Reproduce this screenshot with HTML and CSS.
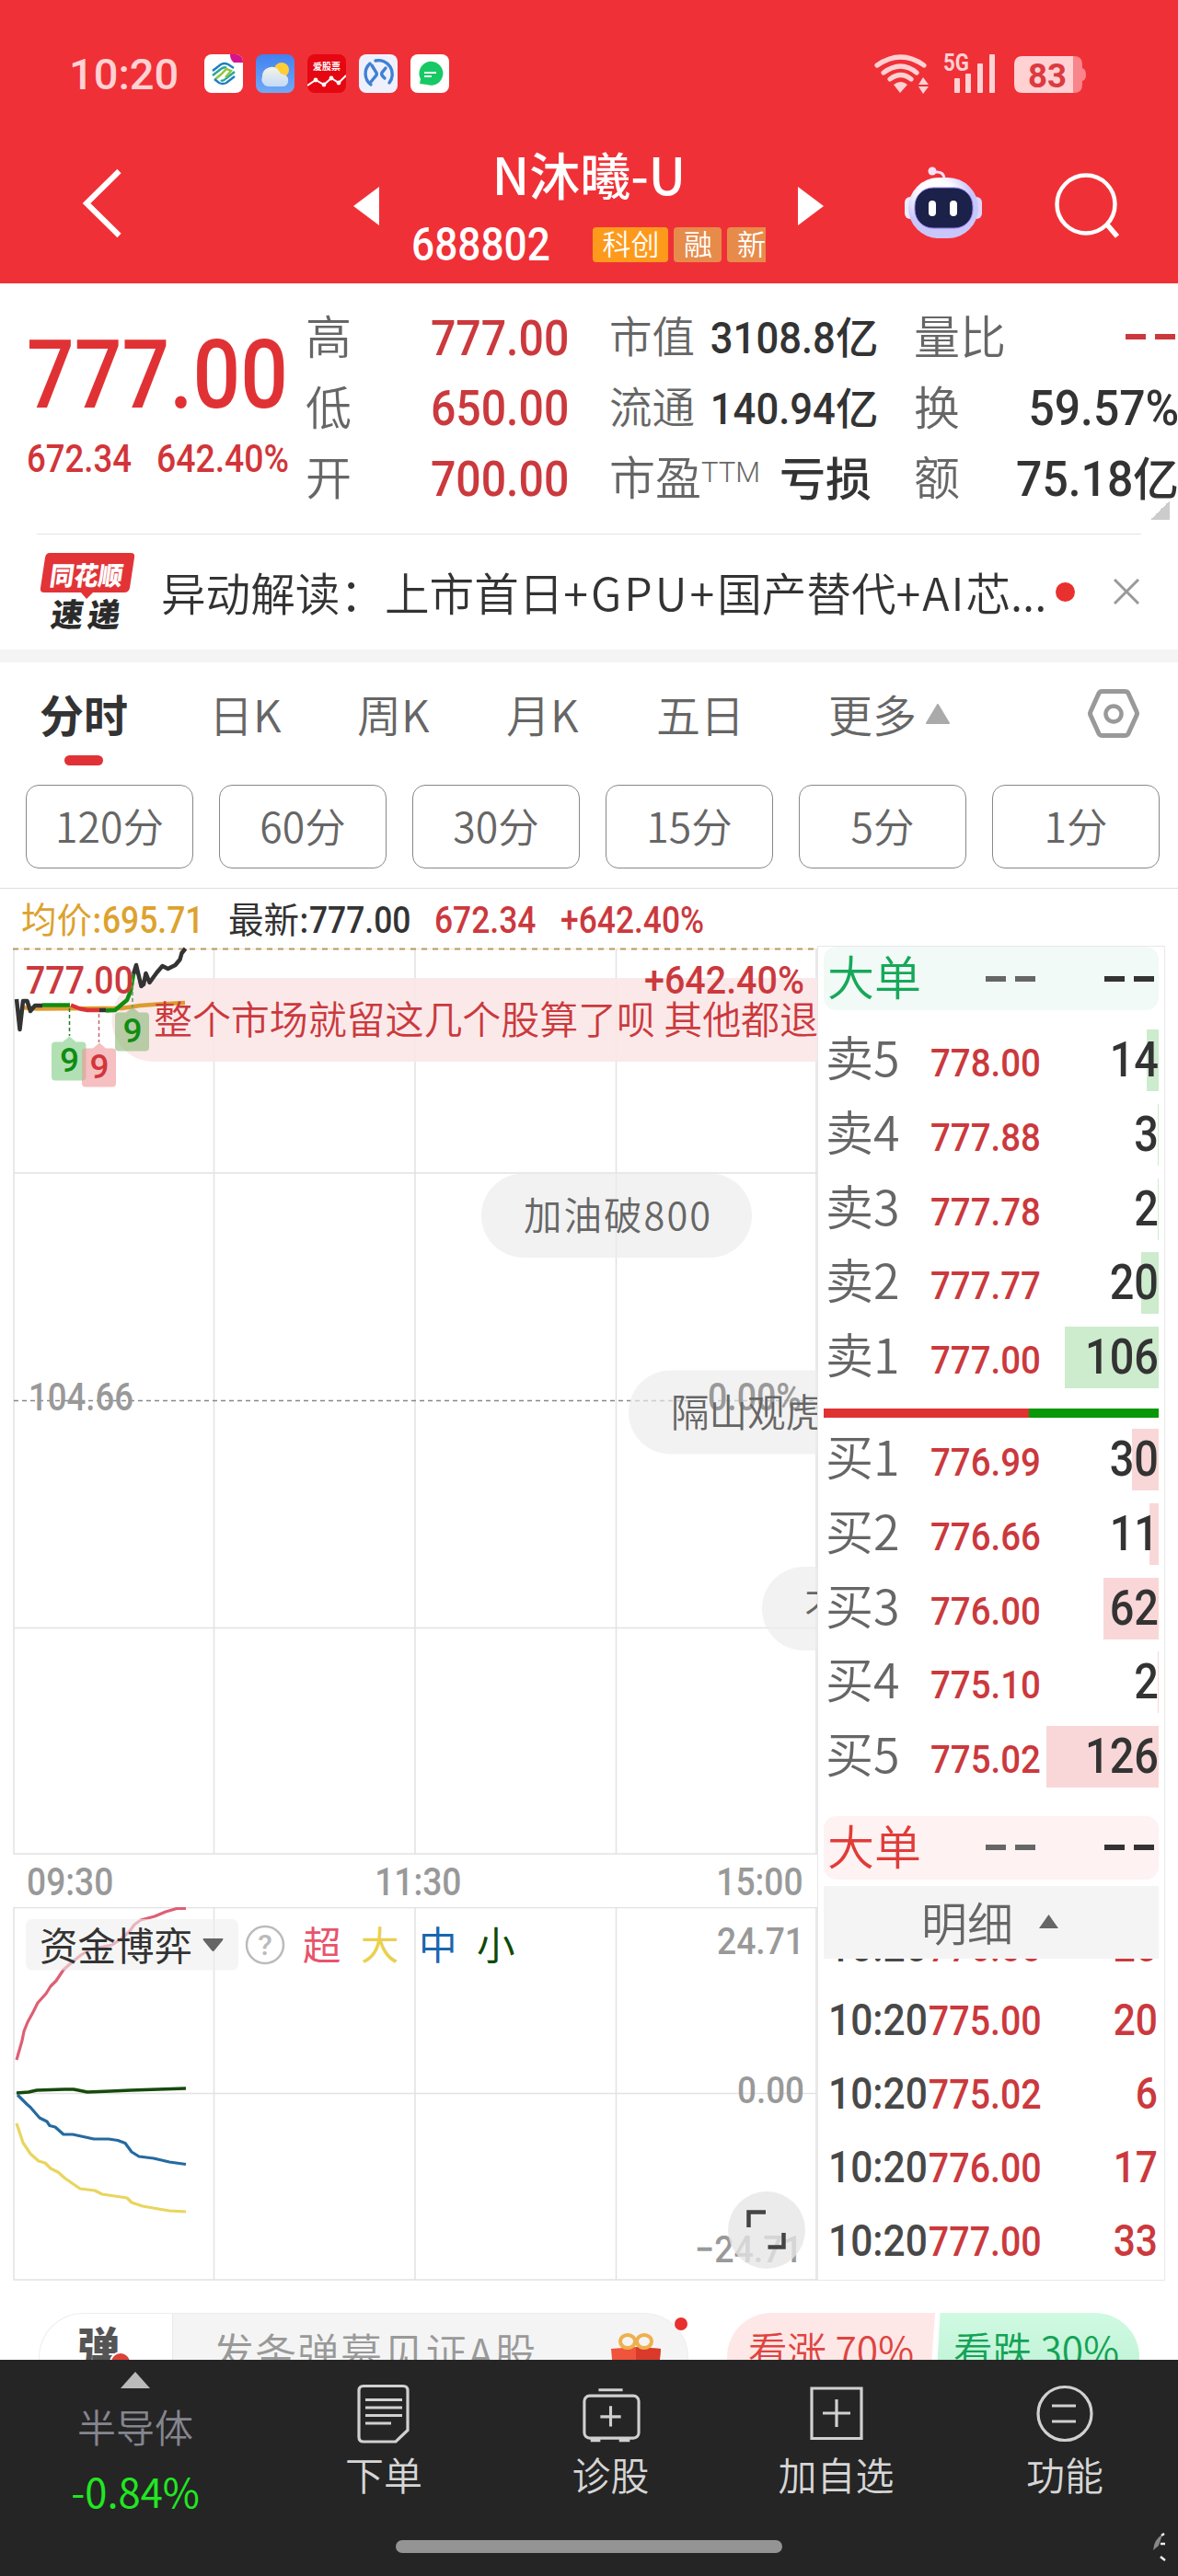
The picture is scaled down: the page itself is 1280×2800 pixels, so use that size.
FILE: index.html
```html
<!DOCTYPE html>
<html lang="zh-CN">
<head>
<meta charset="utf-8">
<title>N沐曦-U 688802</title>
<link rel="stylesheet" href="styles.css">
</head>
<body>
<header class="top">
  <div class="status">
    <span class="clock">10:20</span>
    <div class="apps">
      <svg viewBox="0 0 42 42"><rect width="42" height="42" rx="8" fill="#fff"/><path d="M28 0h6a8 8 0 0 1 8 8v1H32q-4-3-4-9z" fill="#d4148c"/><g fill="none" stroke-width="2.4"><path d="M9 18l9-7q4-2 8 0l6 4" stroke="#1b7fc0"/><path d="M9 23l9-7q4-3 6-1M33 19l-9 7q-4 4-6 2" stroke="#2aa59a"/><path d="M12 27l6-5 6-6 5 2-6 7" stroke="#8dc63f"/><path d="M33 24l-9 7q-4 2-8 0l-5-4" stroke="#1b7fc0"/></g></svg>
      <svg viewBox="0 0 42 42"><defs><linearGradient id="sky" x2="0" y2="1"><stop stop-color="#4381f0"/><stop offset="1" stop-color="#71a9f5"/></linearGradient><linearGradient id="cloud" x2="0" y2="1"><stop stop-color="#f4f3e8"/><stop offset="1" stop-color="#c4daf7"/></linearGradient></defs><rect width="42" height="42" rx="8" fill="url(#sky)"/><circle cx="28" cy="17" r="8" fill="#ffce35"/><path d="M13 35a8 8 0 0 1-6-11 10 10 0 0 1 18-6q2 4 5 4 6 1 5 8-1 5-6 5z" fill="url(#cloud)"/></svg>
      <svg viewBox="0 0 42 42"><rect width="42" height="42" rx="8" fill="#e50712"/><text x="21" y="17" class="mini" text-anchor="middle">爱股票</text><path d="M0 34l9-6 9 5 8-7 8 5 8-8" fill="none" stroke="#fff" stroke-width="2"/><g fill="#fff"><circle cx="9" cy="28" r="2.4"/><circle cx="18" cy="33" r="2.4"/><circle cx="26" cy="26" r="2.4"/><circle cx="34" cy="31" r="2.4"/></g></svg>
      <svg viewBox="0 0 42 42"><rect width="42" height="42" rx="8" fill="#eef1fb"/><g fill="none" stroke="#3f7fd6" stroke-width="3.4" stroke-linecap="round"><path d="M13 33A15 15 0 0 1 12 10M18 7a15 15 0 0 1 15 24"/><path d="M14 12l5 8q1 2-1 4l-5 6M29 15l-4 5q-1 2 1 4l2 2"/></g></svg>
      <svg viewBox="0 0 42 42"><rect width="42" height="42" rx="8" fill="#fff"/><path d="M10 32l1-5A13 13 0 1 1 18 33z" fill="#17c964"/><path d="M15 20h13M15 24h8" stroke="#fff" stroke-width="1.8"/></svg>
    </div>
    <svg class="signals" viewBox="950 56 230 48">
      <g fill="none" stroke="#ffd1d3" stroke-width="5.2" stroke-linecap="round"><path d="M953 71q26-18 51 0M960 79q19-14 36 0M967 86q12-9 23 0"/></g>
      <path d="M971 92q8-6 15 0l-8 9zM998 92l5-8 6 8zM998 94h11l-6 8z" fill="#ffd1d3"/>
      <text x="1025" y="77" class="fiveg" textLength="28" lengthAdjust="spacingAndGlyphs">5G</text>
      <g fill="#ffd1d3"><rect x="1037" y="85" width="6" height="16" rx="1"/><rect x="1049" y="80" width="6" height="21" rx="1"/><rect x="1062" y="69" width="6" height="32" rx="1"/><rect x="1075" y="59" width="6" height="42" rx="1"/></g>
      <path d="M1166 61h1q9 0 9 9v4q4 1 4 7t-4 7v4q0 9-9 9h-1z" fill="#f98489"/><path d="M1111 61h55v40h-55q-9 0-9-9V70q0-9 9-9z" fill="#ffd1d3"/>
      <text x="1117" y="95" class="batt" textLength="42" lengthAdjust="spacingAndGlyphs">83</text>
    </svg>
  </div>
  <nav class="titlebar">
    <svg class="back" viewBox="88 180 46 82"><path d="M129.500 186L94 221l35.500 35" fill="none" stroke="#fff" stroke-width="6"/></svg>
    <svg class="tri" viewBox="0 0 28 42"><path d="M28 0v42L0 21z" fill="#fff"/></svg>
    <div class="stock">
      <h1>N沐曦-U</h1>
      <div class="code"><span class="n">688802</span><div class="tags"><i class="hot">科创</i><i>融</i><i class="cut">新</i></div></div>
    </div>
    <svg class="tri right" viewBox="0 0 28 42"><path d="M0 0v42l28-21z" fill="#fff"/></svg>
    <svg class="robot" viewBox="982 180 86 80"><defs><radialGradient id="rob" cx=".4" cy=".3"><stop offset=".5" stop-color="#fff"/><stop offset="1" stop-color="#c9c6fa"/></radialGradient></defs><path d="M1026 195q0-9-10-8" fill="none" stroke="#f3ddf2" stroke-width="3"/><circle cx="1013" cy="186" r="4.500" fill="#f5e3f6"/><rect x="983" y="214" width="12" height="24" rx="6" fill="#efeaff"/><rect x="1055" y="214" width="12" height="24" rx="6" fill="#dcd5fc"/><rect x="987" y="193" width="76" height="66" rx="33" fill="url(#rob)"/><rect x="994" y="204" width="63" height="44" rx="20" fill="#1b2148" stroke="#8d7cf5"/><rect x="1009" y="218" width="8" height="17" rx="4" fill="#fff"/><rect x="1032" y="218" width="8" height="17" rx="4" fill="#fff"/></svg>
    <svg class="search" viewBox="1144 186 74 74"><circle cx="1180" cy="222" r="31.500" fill="none" stroke="#fff" stroke-width="4.500"/><path d="M1202 243l12 14" stroke="#fff" stroke-width="5.500"/></svg>
  </nav>
</header>

<section class="quote">
  <div class="last">
    <div class="price"><span class="n">777.00</span></div>
    <div class="chg"><span class="n">672.34</span><span class="n">642.40%</span></div>
  </div>
  <dl class="col a">
    <div><dt>高</dt><dd class="up"><span class="n r">777.00</span></dd></div>
    <div><dt>低</dt><dd class="up"><span class="n r">650.00</span></dd></div>
    <div><dt>开</dt><dd class="up"><span class="n r">700.00</span></dd></div>
  </dl>
  <dl class="col b">
    <div class="s"><dt>市值</dt><dd><span class="n r">3108.8</span>亿</dd></div>
    <div class="s"><dt>流通</dt><dd><span class="n r">140.94</span>亿</dd></div>
    <div><dt>市盈<sup>TTM</sup></dt><dd>亏损</dd></div>
  </dl>
  <dl class="col c">
    <div><dt>量比</dt><dd class="up"><span class="dash"></span></dd></div>
    <div><dt>换</dt><dd><span class="n r">59.57%</span></dd></div>
    <div><dt>额</dt><dd><span class="n r">75.18</span>亿</dd></div>
  </dl>
  <i class="corner"></i>
</section>

<section class="news">
  <svg class="logo" viewBox="42 600 106 86"><path d="M54 601h88q5 0 4 5l-5 33q-1 5-6 5h-34l-7 7-6-7H48q-5 0-4-5l5-33q1-5 5-5z" fill="#e23437"/><g class="logotext"><text transform="translate(53 636) skewX(-8)" fill="#fff" font-size="28" textLength="79" lengthAdjust="spacingAndGlyphs">同花顺</text><text transform="translate(54 681) skewX(-8)" fill="#2b2b2b" font-size="35" textLength="75" lengthAdjust="spacing">速递</text></g></svg>
  <p>异动解读：上市首日<span>+GPU+</span>国产替代<span>+AI</span>芯...</p>
  <i class="dot"></i>
  <svg class="close" viewBox="0 0 28 28"><path d="M1 1l26 26M27 1L1 27" stroke="#999" stroke-width="3"/></svg>
</section>

<nav class="tabs">
  <span class="on">分时</span><span>日K</span><span>周K</span><span>月K</span><span>五日</span><span>更多<svg viewBox="0 0 26 22"><path d="M13 1l12 20H1z" fill="#aaa" stroke="#aaa" stroke-linejoin="round" stroke-width="2"/></svg></span>
  <svg class="gear" viewBox="1180 746 60 60"><path d="M1198 751.500h24q3 0 4 2l9 20q1 2 0 4l-9 20q-1 2-4 2h-24q-3 0-4-2l-9-20q-1-2 0-4l9-20q1-2 4-2z" fill="none" stroke="#999" stroke-width="5"/><circle cx="1210" cy="776" r="8.500" fill="none" stroke="#999" stroke-width="4.500"/></svg>
</nav>
<div class="periods"><span>120分</span><span>60分</span><span>30分</span><span>15分</span><span>5分</span><span>1分</span></div>

<div class="legend">
  <span class="avg">均价:<b class="n">695.71</b></span><span>最新:<b class="n">777.00</b></span><span class="up"><b class="n">672.34</b></span><span class="up"><b class="n">+642.40%</b></span>
</div>

<main class="board">
  <div class="charts">
    <svg class="chart" viewBox="0 1028 888 988">
      <g stroke="#e2e2e2" stroke-width="1.500" fill="none"><path d="M15 1031V2015H888M232.500 1031V2015M451 1031V2015M669.500 1031V2015M887 1031V2015M15 1275H888M15 1769.500H888"/></g>
      <path d="M14 1031.500H888" stroke="#f2e6cf"/><path d="M14 1031.500H888" stroke="#b39a62" stroke-width="2" stroke-dasharray="6 6"/>
      <path d="M15 1522.500H888" stroke="#888" stroke-width="1.500" stroke-dasharray="5 4"/>
      <path d="M888 1063H167a45.500 45.500 0 0 0 0 91H888z" fill="#fbe6e7" fill-opacity=".88"/>
      <g fill="#ececec" fill-opacity=".68"><rect x="523" y="1275.500" width="294" height="91.500" rx="45.700"/><rect x="683" y="1489.500" width="294" height="91" rx="45.500"/><rect x="828" y="1703" width="200" height="91" rx="45.500"/></g>
      <g fill="none" stroke-linejoin="round" stroke-width="4.500">
        <path d="M22 1095l18 1.500 70-.5 22 0 20-3 20-1.500 29-1.500" stroke="#dd9c2f"/>
        <path d="M18 1086l3.500 33 3.500-31 4.500 0 3.500 11 5-6h8" stroke="#333"/>
        <path d="M46 1092.500h30" stroke="#0f8d12"/><path d="M77 1092.500l10 4 8 1.500h13" stroke="#db3237"/><path d="M108 1098h7" stroke="#333"/>
        <path d="M115 1098.500l10-.5 7-6 6-5 4-10 3-18" stroke="#0f8d12"/>
        <path d="M145 1059l3-10 5.500 23 2.500-2 2.500-12 4 10 8-11 6-7 6 3 8-4 5-6 2-7 4-5" stroke="#333"/>
      </g>
      <g stroke-width="1.500" stroke-dasharray="4 3"><path d="M75.500 1096v30" stroke="#267a26"/><path d="M107.500 1102v31" stroke="#c66"/><path d="M144 1064v31" stroke="#5b9a5b"/></g>
      <path d="M75.500 1126.500l7 6h7q4 0 4 4v34q0 4-4 4H60q-4 0-4-4v-34q0-4 4-4h8z" fill="#83cd87" fill-opacity=".62"/>
      <path d="M108 1133.500l7 6h7q4 0 4 4v34q0 4-4 4H93q-4 0-4-4v-34q0-4 4-4h8z" fill="#f09498" fill-opacity=".6"/>
      <path d="M144 1094.500l7 6h7q4 0 4 4v34q0 4-4 4h-29q-4 0-4-4v-34q0-4 4-4h8z" fill="#8ab877" fill-opacity=".6"/>
      <g class="nine"><text x="75.500" y="1165" fill="#0f8d12">9</text><text x="108" y="1172" fill="#d3363a">9</text><text x="144" y="1133" fill="#0f8d12">9</text></g>
      <g class="num" font-size="42"><text x="28" y="1079.500" fill="#cb393d" textLength="117" lengthAdjust="spacingAndGlyphs">777.00</text><text x="700" y="1079.500" fill="#cb393d" textLength="174" lengthAdjust="spacingAndGlyphs">+642.40%</text><text x="31" y="1533" fill="#999" textLength="114" lengthAdjust="spacingAndGlyphs">104.66</text><text x="769" y="1533" fill="#999" textLength="102" lengthAdjust="spacingAndGlyphs">0.00%</text></g>
      <g class="cjk" font-size="42"><text x="167" y="1124" fill="#cb393d" textLength="722">整个市场就留这几个股算了呗 其他都退</text><g fill="#666" font-size="41.500"><text x="569" y="1337" textLength="203">加油破800</text><text x="729" y="1551">隔山观虎</text><text x="874" y="1763">不</text></g></g>
    </svg>
    <div class="times"><span class="n">09:30</span><span class="n m">11:30</span><span class="n r">15:00</span></div>
    <svg class="chart" viewBox="0 2073 888 406">
      <g stroke="#e2e2e2" stroke-width="1.500" fill="none"><path d="M888 2073.500H15V2478H888M232.500 2073V2478M451 2073V2478M669.500 2073V2478M887 2073V2478M15 2275.500H888"/></g>
      <g fill="none" stroke-linejoin="round" stroke-width="3.200">
        <path d="M18 2239L24 2218 26 2208 30 2198 36 2187 41 2177 50 2167 55 2159 61 2153 69 2141 78 2133 88 2125 98 2119 122 2114 131 2108 141 2099 146 2092 153 2087 168 2083 180 2078 192 2074.500 202 2074.500" stroke="#de5f74"/>
        <path d="M18 2275l13-1 9-2 30-1 10 0 15 3 25-1 22-1 60-2" stroke="#164a0b" stroke-width="3.500"/>
        <path d="M19 2277L29 2287 33 2290.500 43 2302 51 2306 54 2310.500 60 2312 69 2320 79 2320 102 2325 118 2325 128 2326.500 136 2329.500 143 2339 151 2344 167 2346 184 2350 202 2352.500" stroke="#256a9e"/>
        <path d="M18 2308l7 21 8 12 9 8 7 2 6 6 8 4 8 7 16 11 16 2 8 4 27 4 5 5 12 4 17 3 12 2 18 1" stroke="#e9d55e"/>
      </g>
      <rect x="28" y="2086" width="231" height="55.500" rx="7" fill="#eee" fill-opacity=".6"/>
      <path d="M221 2107h21q1 0 0 2l-9 11q-1 2-3 0l-9-11q-1-2 0-2z" fill="#666"/>
      <circle cx="288" cy="2114" r="20" fill="none" stroke="#bbb" stroke-width="2.500"/>
      <text class="num" x="288" y="2125" font-size="32" fill="#bbb" text-anchor="middle">?</text>
      <g class="cjk legend2" font-size="41.500"><text x="43" y="2131" fill="#333">资金博弈</text><text x="329" y="2130" fill="#e8536c">超</text><text x="392" y="2130" fill="#ead04c">大</text><text x="455" y="2130" fill="#1a66ae">中</text><text x="518" y="2130" fill="#0e4a06">小</text></g>
      <g class="num" font-size="41" fill="#999"><text x="779" y="2124" textLength="95" lengthAdjust="spacingAndGlyphs">24.71</text><text x="801" y="2286" textLength="73" lengthAdjust="spacingAndGlyphs">0.00</text><text x="755" y="2459" textLength="117" lengthAdjust="spacingAndGlyphs">−24.71</text></g>
      <circle cx="833" cy="2424" r="42" fill="#e5e5e5" fill-opacity=".78"/>
      <path d="M813.500 2421v-16.500H832M834.500 2442.500h17V2427" fill="none" stroke="#444" stroke-width="4.500"/>
    </svg>
  </div>

  <aside class="book">
    <div class="big sell"><span>大单</span><i class="dash"></i><i class="dash"></i></div>
    <ul class="rows">
      <li><i class="bar" style="width:13px"></i><span>卖5</span><b class="n r">778.00</b><em class="n r">14</em></li>
      <li><i class="bar" style="width:1px"></i><span>卖4</span><b class="n r">777.88</b><em class="n r">3</em></li>
      <li><i class="bar" style="width:1px"></i><span>卖3</span><b class="n r">777.78</b><em class="n r">2</em></li>
      <li><i class="bar" style="width:19px"></i><span>卖2</span><b class="n r">777.77</b><em class="n r">20</em></li>
      <li><i class="bar" style="width:102px"></i><span>卖1</span><b class="n r">777.00</b><em class="n r">106</em></li>
    </ul>
    <div class="ratio"></div>
    <ul class="rows buy">
      <li><i class="bar" style="width:29px"></i><span>买1</span><b class="n r">776.99</b><em class="n r">30</em></li>
      <li><i class="bar" style="width:10px"></i><span>买2</span><b class="n r">776.66</b><em class="n r">11</em></li>
      <li><i class="bar" style="width:60px"></i><span>买3</span><b class="n r">776.00</b><em class="n r">62</em></li>
      <li><i class="bar" style="width:1px"></i><span>买4</span><b class="n r">775.10</b><em class="n r">2</em></li>
      <li><i class="bar" style="width:122px"></i><span>买5</span><b class="n r">775.02</b><em class="n r">126</em></li>
    </ul>
    <div class="big purchase"><span>大单</span><i class="dash"></i><i class="dash"></i></div>
    <div class="detail">明细<svg viewBox="0 0 21 15"><path d="M10.500 0L21 15H0z" fill="#666"/></svg></div>
    <div class="trades"><ul>
      <li><span class="n">10:20</span><b class="n r">776.00</b><em class="n r">20</em></li>
      <li><span class="n">10:20</span><b class="n r">775.00</b><em class="n r">20</em></li>
      <li><span class="n">10:20</span><b class="n r">775.02</b><em class="n r">6</em></li>
      <li><span class="n">10:20</span><b class="n r">776.00</b><em class="n r">17</em></li>
      <li><span class="n">10:20</span><b class="n r">777.00</b><em class="n r">33</em></li>
    </ul></div>
  </aside>
</main>

<section class="danmu">
  <div class="input"><span class="toggle">弹<i></i></span><span class="hint">发条弹幕见证A股</span>
    <svg class="gift" viewBox="663 2535 58 40"><path d="M665 2553l27-2 27 2-2 22h-50z" fill="#f0543c"/><path d="M692 2551v24h25l2-22z" fill="#d93a2a"/><g fill="none" stroke="#eeb04e" stroke-width="4"><ellipse cx="683" cy="2545" rx="8" ry="7"/><ellipse cx="701" cy="2545" rx="8" ry="7"/></g></svg>
    <i class="badge"></i>
  </div>
  <div class="vote"><span class="bull">看涨 70%</span><span class="bear">看跌 30%</span></div>
</section>

<footer class="bottom">
  <div class="items">
    <a class="index"><svg viewBox="0 0 32 18"><path d="M16 0l16 18H0z" fill="#bbb"/></svg><span>半导体</span><b>-0.84%</b></a>
    <a><svg viewBox="386 2588 64 70"><path d="M396 2593.500h43q5 0 5 5v43l-13 12.500h-35q-5 0-5-5v-50.500q0-5 5-5zM398 2608.500h40M398 2617h40M398 2625.500h40M398 2634h28"/></svg><span>下单</span></a>
    <a><svg viewBox="631 2588 66 70"><rect x="634" y="2603.500" width="61" height="47.500" rx="6"/><path d="M650 2597h27M652 2627h23M663.500 2615v23M641 2653.500h11M673 2653.500h12"/></svg><span>诊股</span></a>
    <a><svg viewBox="877 2588 64 70"><path d="M882 2596h54v54.500h-54zM894 2623h30M909 2608v30"/></svg><span>加自选</span></a>
    <a><svg viewBox="1125 2588 64 70"><circle cx="1157" cy="2623.500" r="29"/><path d="M1143 2615h26M1143 2632h26"/></svg><span>功能</span></a>
  </div>
  <div class="home"></div>
  <svg class="mark" viewBox="0 0 16 32"><path d="M2 19Q3 7 12 2l-4 12z" fill="#888"/><path d="M11 3l3-2M10 12h5M10 26l5 4" stroke="#eee" stroke-width="2.500"/></svg>
</footer>
</body>
</html>
```
FILE: styles.css
```css
* { box-sizing: border-box; margin: 0; padding: 0; }
body { width: 1280px; height: 2800px; overflow: hidden; background: #fff; color: #333; font-family: "Noto Sans CJK SC", sans-serif; font-weight: 350; line-height: 1; white-space: nowrap; }
svg { display: block; flex: none; }
i, em { font-style: normal; }
ul { list-style: none; }
.n { display: inline-block; font-family: Roboto, sans-serif; font-weight: 500; transform: scaleX(.885); transform-origin: left; }
.n.r { transform-origin: right; }
.n.m { transform-origin: center; }
.up { color: #cb393d; }
.num { font-family: Roboto, sans-serif; font-weight: 500; }
.cjk { font-family: "Noto Sans CJK SC", sans-serif; font-weight: 350; }
.dash { display: block; width: 54px; height: 6px; background: linear-gradient(90deg, currentColor 22px, transparent 22px 32px, currentColor 32px); }

/* header */
.top { height: 308px; background: #f03037; color: #fff; }
.status { height: 160px; padding: 0 100px 0 75px; display: flex; align-items: center; }
.clock { width: 147px; font: 500 47px/1 Roboto, sans-serif; color: #ffd1d3; }
.apps { display: flex; gap: 14px; flex: 1; }
.apps svg { width: 42px; height: 42px; }
.mini { font: 700 10px "Noto Sans CJK SC", sans-serif; fill: #fff; }
.signals { width: 230px; height: 48px; }
.fiveg { font: 700 25px Roboto, sans-serif; fill: #ffd1d3; }
.batt { font: 700 36px Roboto, sans-serif; fill: #dc3a40; }
.titlebar { height: 148px; display: flex; align-items: flex-start; padding-left: 88px; }
.back { width: 46px; height: 82px; margin-top: 20px; }
.tri { width: 28px; height: 42px; margin: 43px 0 0 250px; }
.tri.right { margin-left: 35px; }
.stock { width: 420px; margin-top: 2px; }
.stock h1 { font-size: 55px; font-weight: 500; text-align: center; line-height: 52px; height: 54px; padding-left: 36px; }
.code { display: flex; align-items: center; margin-top: 25px; padding-left: 35px; height: 50px; }
.code .n { font-size: 50px; width: 198px; }
.tags { display: flex; gap: 6px; width: 188px; overflow: hidden; }
.tags i { flex: none; width: 52px; height: 38px; border-radius: 4px; background: #e78b4b; font-size: 31px; line-height: 34px; text-align: center; }
.tags .hot { width: 82px; background: #fd9a1c; }
.robot { width: 86px; height: 80px; margin: 20px 0 0 87px; }
.search { width: 74px; height: 74px; margin: 26px 0 0 76px; }

/* quote */
.quote { position: relative; height: 272px; display: grid; grid-template-columns: 332px 286px 284px 287px; padding-top: 20px; }
.last { color: #e03235; padding: 20px 0 0 29px; }
.price { font-size: 104px; line-height: 100px; }
.price .n { transform: scaleX(.875); }
.chg { display: flex; font-size: 42px; margin-top: 20px; color: #d23539; }
.chg .n { width: 141px; transform: scaleX(.87); }
.chg .n:last-child { transform: scaleX(.89); }
.col.b { margin-left: 44px; }
.col { font-size: 50px; }
.col.b { width: 285px; }
.col.c { width: 288px; margin-left: 91px; }
.col > div { height: 76.5px; display: flex; justify-content: space-between; align-items: center; }
.col dt { color: #666; position: relative; top: -3px; }
.col dd { display: flex; align-items: baseline; font-weight: 500; line-height: 60px; position: relative; top: -2px; }
.col .n { font-size: 53px; line-height: 1; transform: scaleX(.91); }
.col.a dd { top: 2px; }
.col.c .n { transform: scaleX(.94); }
.col.c div:nth-child(2) dd { top: 2px; }
.col .s { font-size: 46.5px; }
.col .s .n { font-size: 49px; transform: scaleX(.89); }
.col sup { font: 300 31px/1 Roboto, sans-serif; display: inline-block; vertical-align: 14px; }
.col.c .dash { margin-right: 4px; position: relative; top: 2px; }
.corner { position: absolute; right: 9px; top: 236px; width: 21px; height: 21px; background: linear-gradient(135deg, transparent 50%, #ccc 50%); }

/* news */
.news { height: 140px; border-bottom: 14px solid #f4f4f4; display: flex; align-items: center; padding-left: 42px; position: relative; }
.news::before { content: ""; position: absolute; left: 40px; right: 40px; top: 0; height: 1px; background: #e4e4e4; }
.logo { width: 106px; height: 86px; }
.logotext { font-family: "Noto Sans CJK SC", sans-serif; font-weight: 900; }
.news p { width: 972px; margin-left: 27px; font-size: 48.6px; }
.news p span { letter-spacing: 3px; }
.news p span + span { letter-spacing: 2px; }
.dot { width: 21px; height: 21px; border-radius: 50%; background: #e8302e; }
.close { width: 28px; height: 28px; margin-left: 42px; }

/* tabs */
.tabs { height: 133px; display: grid; grid-template-columns: 184px 161px 162px 163px 187px 280px 60px; padding-left: 43px; font-size: 48px; color: #666; align-items: start; }
.tabs span { line-height: 48px; margin-top: 31px; display: flex; }
.tabs .on { font-weight: 700; color: #333; position: relative; }
.tabs .on::after { content: ""; position: absolute; left: 27px; top: 70px; width: 42px; height: 11px; border-radius: 6px; background: #e03236; }
.tabs span svg { width: 26px; height: 22px; margin: 14px 0 0 10px; }
.tabs .gear { width: 60px; height: 60px; margin-top: 26px; }
.periods { height: 113px; display: flex; gap: 28px; padding-left: 28px; border-bottom: 1px solid #ddd; color: #666; font-size: 44.500px; }
.periods span { width: 182px; height: 91px; border: 1px solid #888; border-radius: 14px; text-align: center; line-height: 86px; }

/* legend */
.legend { height: 62px; display: grid; grid-template-columns: 225px 224px 137px auto; padding-left: 23px; font-size: 38.500px; line-height: 62px; font-weight: 400; justify-content: start; }
.legend .n { font-size: 40px; }
.legend .avg { color: #dda22e; }

/* board */
.board { display: grid; grid-template-columns: 888px 378px; height: 1451px; }
.chart { width: 888px; }
.nine { font: 500 37px Roboto, sans-serif; text-anchor: middle; }
.legend2 { font-weight: 400; }
.times { height: 57px; display: flex; justify-content: space-between; align-items: center; padding: 2px 15px 0 29px; font-size: 42px; color: #999; }
.times .m { position: relative; left: 3px; }
.book { height: 1451px; border: 1px solid #e8e8e8; padding: 0 6px; overflow: hidden; }
.big { height: 69px; border-radius: 14px; display: grid; grid-template-columns: 172px 129px 54px; align-items: center; padding-left: 4px; font-size: 51px; background: #f1faf6; color: #666; }
.big span { color: #16a85a; position: relative; top: -3px; }
.big .dash:last-child { color: #333; }
.purchase { background: #fef2f2; margin-top: 24px; }
.purchase span { color: #e03c39; }
.rows { margin-top: 14px; }
.rows li { position: relative; height: 80.8px; display: grid; grid-template-columns: 103px 129px 130px; align-items: baseline; padding-left: 2px; }
.rows span { font-size: 52px; line-height: 72px; color: #666; position: relative; }
.rows b, .rows em { position: relative; text-align: right; }
.rows b { font-size: 42px; color: #cb393d; transform: scaleX(.915); }
.rows em { font-size: 53px; }
.bar { position: absolute; right: 0; top: 7px; height: 67px; background: #cdebcd; }
.buy { margin-top: 5px; }
.buy .bar { background: #f9d7d8; }
.ratio { height: 10px; margin-top: 15px; background: linear-gradient(90deg, #e03232 223px, #089808 223px); }
.detail { height: 79px; margin-top: 7px; background: #f4f4f4; color: #666; font-size: 50px; line-height: 77px; display: flex; padding-left: 106px; }
.detail svg { width: 21px; height: 15px; margin: 31px 0 0 28px; }
.trades { height: 349px; overflow: hidden; }
.trades ul { margin-top: -53px; }
.trades li { height: 80.1px; display: grid; grid-template-columns: 93px 138px 127px; align-items: baseline; padding-left: 5px; line-height: 80px; color: #cb393d; }
.trades span { font-size: 48px; color: #484848; }
.trades b { font-size: 44.500px; text-align: right; }
.trades em { font-size: 48px; text-align: right; }

/* comment bar */
.danmu { height: 86px; overflow: hidden; padding: 35px 42px 0; display: flex; }
.input { position: relative; width: 706px; height: 97px; border: 1px solid #eee; border-radius: 48px; background: #f4f4f4; display: flex; }
.toggle { position: relative; width: 145px; height: 97px; border-radius: 48px 0 0 48px; background: #fff; border-right: 1px solid #e8e8e8; font-size: 46px; font-weight: 900; color: #555; padding: 8px 0 0 41px; line-height: 50px; }
.toggle i { position: absolute; left: 76px; top: 41px; width: 24px; height: 24px; border-radius: 50%; background: #dc4238; border: 2px solid #fff; }
.hint { width: 474px; padding: 18px 0 0 43px; font-size: 45px; letter-spacing: 1.3px; color: #999; }
.gift { width: 58px; height: 40px; margin-top: 20px; }
.badge { position: absolute; right: 0; top: 4px; width: 14px; height: 14px; border-radius: 50%; background: #e8302e; }
.vote { display: flex; margin-left: 42px; width: 448px; height: 97px; border-radius: 48px; overflow: hidden; font-size: 42.500px; line-height: 78px; }
.bull { width: 226px; padding-left: 23px; background: linear-gradient(#fde7e7, #ffe9e7); color: #df4440; clip-path: polygon(0 0, 100% 0, 97% 100%, 0 100%); }
.bear { flex: 1; padding: 0 0 0 20px; background: linear-gradient(#cffae2, #b9efd0); color: #14a356; clip-path: polygon(2.500% 0, 100% 0, 100% 100%, 0 100%); }

/* bottom bar */
.bottom { position: relative; height: 235px; background: #252525; color: #d6d6d6; }
.items { display: grid; grid-template-columns: 294px 246px 247px 243px 254px; font-size: 42px; height: 196px; }
.items a { display: flex; flex-direction: column; align-items: center; padding-top: 23px; }
.items a svg { width: 64px; height: 70px; fill: none; stroke: #d0d0d0; stroke-width: 3.200; }
.items a span { line-height: 42px; margin-top: 10px; }
.items .index { padding-top: 13px; color: #85858f; }
.items .index svg { width: 32px; height: 18px; stroke: none; }
.items .index span { margin-top: 20px; }
.items .index b { font-weight: 400; margin-top: 28px; color: #22e622; font-size: 43.500px; }
.home { width: 420px; height: 14px; margin: 0 auto; border-radius: 7px; background: #949494; }
.mark { position: absolute; right: 13px; bottom: 15px; width: 16px; height: 32px; }
```
